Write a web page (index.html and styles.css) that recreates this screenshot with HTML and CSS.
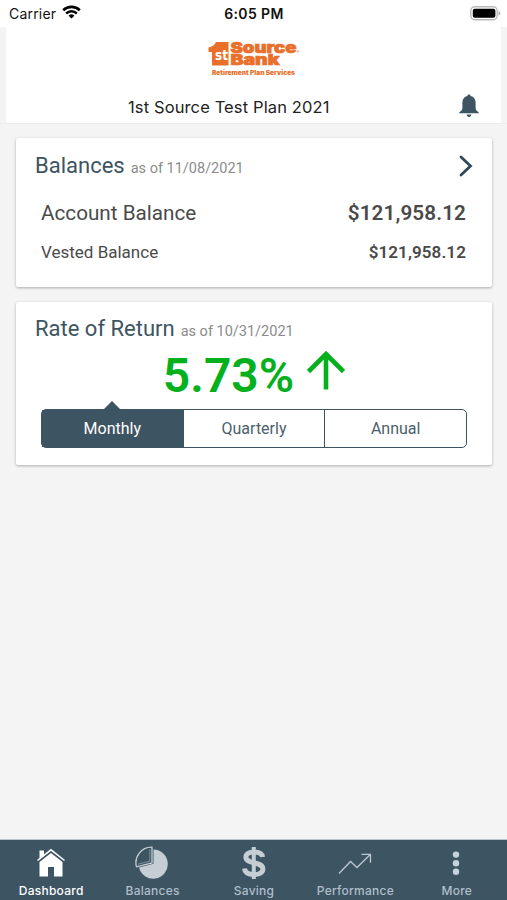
FILE: index.html
```
<!DOCTYPE html>
<html lang="en">
<head>
    <meta charset="UTF-8">
    <meta name="viewport" content="width=device-width, initial-scale=1.0">
    <title>Dashboard</title>
    <link rel="stylesheet" href="styles.css">
</head>
<body>
    <div class="status-bar">
        <div class="carrier">
            <span>Carrier</span>
            <svg width="19" height="14" viewBox="0 0 19 14">
                <path d="M1.2 5.2a12 12 0 0 1 16.6 0" fill="none" stroke="#000" stroke-width="2.6"/>
                <path d="M4.2 8.5a7.6 7.6 0 0 1 10.6 0" fill="none" stroke="#000" stroke-width="2.5"/>
                <path d="M9.5 13.6L6.6 10.7a4.2 4.2 0 0 1 5.8 0z"/>
            </svg>
        </div>
        <div class="time">6:05 PM</div>
        <svg class="battery" width="31" height="15" viewBox="0 0 31 15">
            <rect x="0.8" y="0.8" width="26.4" height="13" rx="4" fill="#fff" stroke="#b9b9b9" stroke-width="1.4"/>
            <rect x="2.8" y="2.8" width="22.6" height="9" rx="2" fill="#000"/>
            <path d="M28.6 5v4.6q1.6-.6 1.6-2.3t-1.6-2.3z" fill="#aaa"/>
        </svg>
    </div>

    <header class="header">
        <svg class="logo" width="94" height="40" viewBox="0 0 94 40">
            <path d="M0.5 9.500Q6 8.500 8 4H20.500V27.500H4V14H0.500z" fill="#e8702a"/>
            <text class="logo-st" x="7" y="22" textLength="13" lengthAdjust="spacingAndGlyphs">st</text>
            <text class="logo-name" x="22.500" y="14.500" textLength="66" lengthAdjust="spacingAndGlyphs">Source</text>
            <text class="logo-name" x="22.500" y="27.200" textLength="49" lengthAdjust="spacingAndGlyphs">Bank</text>
            <circle cx="90" cy="13.500" r="0.900" fill="none" stroke="#e8702a" stroke-width="0.500"/>
            <text class="logo-tag" x="4" y="37.200" textLength="83" lengthAdjust="spacingAndGlyphs">Retirement Plan Services</text>
        </svg>
        <div class="plan-row">
            <h1 class="plan-name">1st Source Test Plan 2021</h1>
            <svg class="bell" width="20" height="24" viewBox="0 0 20 24">
                <path d="M10 .4c1 0 1.600.600 1.600 1.500 3.200.700 5 3.300 5 6.600v5.300c0 2 .900 3.300 3.100 4.500v.900H.3v-.9c2.200-1.200 3.100-2.500 3.100-4.500V8.500c0-3.300 1.800-5.900 5-6.600C8.400 1 9 .4 10 .4zM7.600 20.400h4.800c-.2 1.600-1.100 2.500-2.400 2.500s-2.200-.9-2.400-2.500z" fill="#3d5462"/>
            </svg>
        </div>
    </header>

    <main class="content">
        <section class="card balances">
            <div class="card-header">
                <h2 class="balances-title">Balances</h2>
                <span class="as-of">as of 11/08/2021</span>
                <svg class="chevron" width="14" height="22" viewBox="0 0 14 22">
                    <path d="M2 2l9.500 9L2 20" fill="none" stroke="#2f495b" stroke-width="2.800" stroke-linecap="round"/>
                </svg>
            </div>
            <div class="row account">
                <span class="account-label">Account Balance</span>
                <span class="account-amount">$121,958.12</span>
            </div>
            <div class="row vested">
                <span class="vested-label">Vested Balance</span>
                <span class="vested-amount">$121,958.12</span>
            </div>
        </section>

        <section class="card return">
            <div class="card-header">
                <h2 class="return-title">Rate of Return</h2>
                <span class="as-of">as of 10/31/2021</span>
            </div>
            <div class="rate">
                <span>5.73%</span>
                <svg width="38" height="39" viewBox="0 0 38 39">
                    <path d="M19 38.500V3M1.500 20.500L19 3l17.500 17.500" fill="none" stroke="#04b01c" stroke-width="4.600"/>
                </svg>
            </div>
            <div class="periods">
                <button class="period active">Monthly</button>
                <button class="period">Quarterly</button>
                <button class="period">Annual</button>
            </div>
        </section>
    </main>

    <nav class="tab-bar">
        <a class="tab active">
            <svg width="34" height="34" viewBox="0 0 34 34">
                <path d="M5.500 13V4.500H10V10z" fill="#fff"/>
                <path d="M5.500 16L17 7 28.500 16V30.500H20V21h-6v9.500H5.500z" fill="#fff"/>
                <path d="M3.500 14.500L17 3.800 30.500 14.500" fill="none" stroke="#fff" stroke-width="1.500"/>
            </svg>
            <span>Dashboard</span>
        </a>
        <a class="tab">
            <svg width="34" height="34" viewBox="0 0 34 34">
                <path d="M18.500 3.500A14.600 14.600 0 1 1 4 21.500L18.500 17.800z" fill="#c5ced5"/>
                <path d="M17 1.200V17L1.500 20.800A15.500 15.500 0 0 1 17 1.200z" fill="#3d5462" stroke="#c5ced5" stroke-width="1.300"/>
                <path d="M14.800 3.500V15.200L3 18.200" fill="none" stroke="#9eacb7" stroke-width="0.700"/>
            </svg>
            <span>Balances</span>
        </a>
        <a class="tab">
            <svg width="34" height="34" viewBox="0 0 34 34">
                <path d="M25.500 11C25 7.500 21.500 6 16.800 6c-4.600 0-7.900 1.800-7.900 5 0 8 17 3.800 17 12 0 3.500-3.800 5.600-9 5.600-5.400 0-9-2.200-9.400-6" fill="none" stroke="#c5ced5" stroke-width="5"/>
                <path d="M16.800 1v32" fill="none" stroke="#c5ced5" stroke-width="4"/>
            </svg>
            <span>Saving</span>
        </a>
        <a class="tab">
            <svg width="34" height="34" viewBox="0 0 34 34">
                <path d="M1 27.500L12.500 15.500l6.500 6L32.500 8.300M23.500 8.300h9v8.400" fill="none" stroke="#bcc8d0" stroke-width="1.300"/>
            </svg>
            <span>Performance</span>
        </a>
        <a class="tab">
            <svg width="34" height="34" viewBox="0 0 34 34" fill="#c5d3df">
                <circle cx="17" cy="8.600" r="3.200"/>
                <circle cx="17" cy="17.200" r="3.200"/>
                <circle cx="17" cy="25.800" r="3.200"/>
            </svg>
            <span>More</span>
        </a>
    </nav>
</body>
</html>
```
FILE: styles.css
```
* {
    box-sizing: border-box;
}

body {
    display: flex;
    flex-direction: column;
    height: 900px;
    margin: 0;
    font-family: Roboto, sans-serif;
    color: #4a4a4a;
    background-color: #f4f4f4;
}

svg {
    display: block;
    flex: none;
}

h1, h2 {
    margin: 0;
    font-weight: normal;
    white-space: nowrap;
}

.status-bar {
    display: grid;
    grid-template-columns: 1fr auto 1fr;
    align-items: center;
    height: 27px;
    padding: 0 6px 0 9px;
    font-family: Inter, sans-serif;
    font-size: 14px;
    color: #111;
    background-color: #fff;
}

.carrier {
    display: flex;
    align-items: center;
    gap: 6px;
    letter-spacing: 0.2px;
}

.carrier svg {
    margin-top: -3px;
}

.time {
    margin-right: 2px;
    font-weight: 600;
    letter-spacing: 0.4px;
}

.battery {
    justify-self: end;
}

.header {
    height: 96px;
    margin: 0 6px;
    padding-top: 11px;
    background-color: #fff;
}

.logo {
    margin-left: 202px;
    overflow: visible;
}

.logo-st {
    font: bold 14px "DejaVu Sans", sans-serif;
    fill: #fff;
}

.logo-name {
    font: 900 15px Inter, sans-serif;
    fill: #e8702a;
    stroke: #e8702a;
    stroke-width: 0.7px;
}

.logo-tag {
    font: 900 6.500px Inter, sans-serif;
    fill: #e8702a;
}

.plan-row {
    display: flex;
    align-items: center;
    margin-top: 16px;
    padding: 0 22px 0 122px;
}

.plan-name {
    flex: 1;
    padding-top: 2px;
    font-family: Inter, sans-serif;
    font-size: 16.500px;
    letter-spacing: 0.12px;
    color: #222;
}

.content {
    flex: 1;
    padding: 14px 15px 0 16px;
    border-top: 1px solid #ededed;
}

.card {
    margin-bottom: 15px;
    padding: 0 20px 0 19px;
    background-color: #fff;
    border-radius: 2px;
    box-shadow: 0 1px 3px rgba(0, 0, 0, 0.3);
}

.balances {
    height: 149px;
    padding-top: 14px;
}

.return {
    height: 163px;
    padding-top: 13px;
}

.card-header {
    display: flex;
    align-items: baseline;
    height: 28px;
    gap: 6px;
    line-height: 28px;
}

.card-header h2 {
    font-size: 22px;
    color: #3d5462;
}

.as-of {
    font-size: 14.500px;
    color: #8b8b8b;
}

.chevron {
    align-self: center;
    margin-left: auto;
    margin-right: -1px;
}

.row {
    display: flex;
    justify-content: space-between;
    padding: 0 6px;
}

.account {
    margin-top: 17px;
    font-size: 20.700px;
    line-height: 32px;
}

.vested {
    margin-top: 9px;
    font-size: 17px;
    line-height: 28px;
}

.account-amount, .vested-amount {
    font-weight: 600;
    letter-spacing: 0.1px;
}

.rate {
    display: flex;
    justify-content: center;
    height: 66px;
    gap: 13px;
    padding-left: 1px;
    font-size: 48px;
    font-weight: 600;
    line-height: 66px;
    color: #04b01c;
}

.rate svg {
    margin-top: 8px;
}

.periods {
    display: flex;
    height: 39px;
    margin: 0 5px 0 6px;
    border: 1px solid #3d5462;
    border-radius: 5px;
}

.period {
    position: relative;
    flex: 1;
    padding: 0;
    border: none;
    font-family: Roboto, sans-serif;
    font-size: 16px;
    color: #4b5f6c;
    background: none;
}

.period + .period {
    border-left: 1px solid #3d5462;
}

.period.active {
    color: #fff;
    background-color: #3d5462;
}

/* pointer above the selected period */
.period.active::before {
    content: "";
    position: absolute;
    top: -9px;
    left: 50%;
    margin-left: -9px;
    border: 9px solid transparent;
    border-top: none;
    border-bottom-color: #3d5462;
}

.tab-bar {
    display: flex;
    height: 61px;
    padding-top: 6px;
    border-top: 1px solid #bcc3c8;
    background-color: #3d5462;
}

.tab {
    display: flex;
    flex: 1;
    flex-direction: column;
    align-items: center;
    font-family: Inter, sans-serif;
    font-size: 12px;
    font-weight: 500;
    letter-spacing: 0.25px;
    color: #afbfcb;
}

.tab span {
    margin-top: 3px;
    padding-left: 1px;
    line-height: 16px;
}

.tab.active {
    color: #fff;
}
```
